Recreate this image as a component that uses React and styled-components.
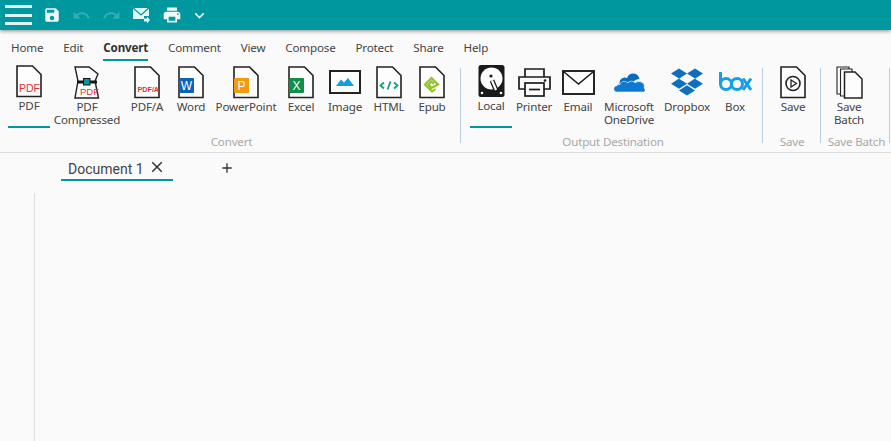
import styled, { createGlobalStyle } from "styled-components";
import { FaDropbox } from "react-icons/fa";
import { MdSave, MdUndo, MdRedo, MdPrint, MdKeyboardArrowDown, MdClose, MdAdd } from "react-icons/md";

const GlobalStyle = createGlobalStyle`
  html, body { margin: 0; padding: 0; height: 100%; background: #fafafa; }
  #root { height: 100%; }
`;

const UI_FONT = `"Noto Sans", "Open Sans", sans-serif`;

const DocShape = ({ children }) => (
  <svg width="26" height="33" viewBox="0 0 26 33">
    <path d="M1 1 H16.5 L25 9.5 V31.5 H1 Z" fill="#fdfdfd" stroke="#222" strokeWidth="1.6" />
    {children}
  </svg>
);

const PdfIcon = () => (
  <DocShape>
    <text x="3" y="26.5" fontFamily="Liberation Sans" fontSize="10.5" fill="#e0303a">PDF</text>
  </DocShape>
);

const PdfCompressedIcon = () => (
  <svg width="26" height="33" viewBox="0 0 26 33" overflow="visible">
    <path d="M1 1 H15 L24 8 L21 15 L24.5 32 H1 L4 15 Z" fill="#fdfdfd" stroke="#222" strokeWidth="1.4" />
    <path d="M3 16 H23" stroke="#151515" strokeWidth="3" />
    <rect x="9.5" y="12.5" width="6.5" height="6.5" fill="#00979f" stroke="#151515" strokeWidth="1" />
    <text x="6" y="28.5" fontFamily="Liberation Sans" fontSize="9.5" fill="#e0303a">PDF</text>
  </svg>
);

const PdfAIcon = () => (
  <DocShape>
    <text x="3.5" y="26" fontFamily="Liberation Sans" fontSize="7.2" fontWeight="700" fill="#e0303a">PDF/A</text>
  </DocShape>
);

const AppDocIcon = ({ color, letter }) => (
  <DocShape>
    <rect x="1" y="12" width="15" height="15" rx="1" fill={color} />
    <text x="8.5" y="24" textAnchor="middle" fontFamily="Liberation Sans" fontSize="12" fill="#fff">{letter}</text>
  </DocShape>
);

const ImageIcon = () => (
  <svg width="32" height="24" viewBox="0 0 32 24">
    <rect x="1" y="1" width="30" height="22" fill="#fdfdfd" stroke="#222" strokeWidth="2" />
    <path d="M7 16 L12 9.5 L15 12.5 L19 8 L25 16 Z" fill="#0f9fe3" />
  </svg>
);

const HtmlIcon = () => (
  <DocShape>
    <path d="M8 16.5 L4.5 19.5 L8 22.5 M18 16.5 L21.5 19.5 L18 22.5 M14.5 15.5 L11.5 23.5" fill="none" stroke="#12a26c" strokeWidth="1.8" />
  </DocShape>
);

const EpubIcon = () => (
  <DocShape>
    <path d="M16.5 23 L13 25.5 L6 18.5 L12.5 12 L19 18.5 L12.5 22 L9.5 18.5 L12.5 15.5 L15 18"
      fill="none" stroke="#8cc21f" strokeWidth="2.1" />
  </DocShape>
);

const LocalIcon = () => (
  <svg width="27" height="32" viewBox="0 0 27 32">
    <rect x="0.5" y="0" width="26" height="32" rx="2.5" fill="#1a1a1a" />
    <circle cx="13.5" cy="13.5" r="11" fill="#fdfdfd" />
    <circle cx="13" cy="11" r="1.6" fill="#1a1a1a" />
    <path d="M14 15.5 L18 25" stroke="#1a1a1a" strokeWidth="4.8" />
    <path d="M14 15.5 L18 25" stroke="#fdfdfd" strokeWidth="2.2" />
    <circle cx="4" cy="28" r="1.3" fill="#fdfdfd" />
    <circle cx="23" cy="28" r="1.3" fill="#fdfdfd" />
  </svg>
);

const PrinterIcon = () => (
  <svg width="33" height="29" viewBox="0 0 33 29">
    <g fill="none" stroke="#1c1c1c" strokeWidth="1.7">
      <path d="M7 9 V1 H26 V9" />
      <path d="M7 21 H1 V9 H32 V21 H26" />
      <rect x="7" y="15" width="19" height="13" fill="#fdfdfd" />
      <path d="M11 21.5 H22" />
    </g>
    <circle cx="27" cy="12.5" r="1.3" fill="#1c1c1c" />
  </svg>
);

const EmailIcon = () => (
  <svg width="33" height="25" viewBox="0 0 33 25">
    <rect x="1" y="1" width="31" height="23" fill="#fdfdfd" stroke="#1c1c1c" strokeWidth="1.9" />
    <path d="M2 2 L16.5 14 L31 2" fill="none" stroke="#1c1c1c" strokeWidth="1.6" />
  </svg>
);

const OneDriveIcon = () => (
  <svg width="33" height="24" viewBox="0 0 33 24">
    <path d="M7 15 C5 9 11 6 14 8 C16 2 25 2 26.5 9 C24 9 22 10 21 11.5 C17 10 14 12 14 14.5 C11 14 9 15 8.5 17 C8 16.5 7.5 16 7 15 Z" fill="#0a6cbf" />
    <path d="M3 22 C0 21 0 16 4 15.8 C4 15 5 14 7 14.5 C8.5 10 13 11 15 13 C17 10 21 11 22 13 C26 9.5 33 13 31 18 C33 20 32 22 30 22 Z" fill="#0f78d0" stroke="#fafafa" strokeWidth="0.6" />
  </svg>
);

const DropboxIcon = styled(FaDropbox)`
  width: 32px;
  height: 32px;
  color: #0d6fc0;
`;

const BoxIcon = () => (
  <svg width="33" height="20" viewBox="0 0 33 20">
    <g fill="none" stroke="#149fe8" strokeWidth="3">
      <path d="M1.5 0 V12" />
      <circle cx="7" cy="12" r="5.5" />
      <circle cx="18" cy="12" r="5.5" />
      <path d="M24 6.5 L32 18 M32 6.5 L24 18" />
    </g>
  </svg>
);

const SaveIcon = () => (
  <DocShape>
    <circle cx="13" cy="17.5" r="7" fill="none" stroke="#222" strokeWidth="1.6" />
    <path d="M11 14 L16.5 17.5 L11 21 Z" fill="none" stroke="#222" strokeWidth="1.3" />
  </DocShape>
);

const SaveBatchIcon = () => (
  <svg width="27" height="33" viewBox="0 0 27 33">
    <g fill="#fdfdfd" stroke="#222" strokeWidth="1.1">
      <path d="M1 1 H13 V28 H1 Z" />
      <path d="M4.5 3 H16 V30 H4.5 Z" />
      <path d="M8.5 6 H19 L26 13 V32 H8.5 Z" strokeWidth="1.5" />
    </g>
  </svg>
);

const MailSendIcon = () => (
  <svg width="17" height="17" viewBox="0 0 17 17">
    <path d="M0 1 H16 V9 H11 V12 H0 Z" fill="#e3f6f6" />
    <path d="M0 1 L8 8 L16 1" fill="none" stroke="#00979f" strokeWidth="1.3" />
    <path d="M11 11.5 H14 V9.5 L17 13 L14 16.5 V14.5 H11 Z" fill="#e3f6f6" />
  </svg>
);

const MENU = ["Home", "Edit", "Convert", "Comment", "View", "Compose", "Protect", "Share", "Help"];

const GROUPS = [
  {
    label: "Convert",
    width: 453,
    pad: 0,
    shift: -6,
    items: [
      { label: "PDF", w: 42, icon: <PdfIcon />, selected: true },
      { label: "PDF Compressed", w: 74, icon: <PdfCompressedIcon /> },
      { label: "PDF/A", w: 46, icon: <PdfAIcon /> },
      { label: "Word", w: 42, icon: <AppDocIcon color="#0b62b8" letter="W" /> },
      { label: "PowerPoint", w: 68, icon: <AppDocIcon color="#f59a0c" letter="P" /> },
      { label: "Excel", w: 42, icon: <AppDocIcon color="#0f8f4a" letter="X" /> },
      { label: "Image", w: 46, icon: <ImageIcon /> },
      { label: "HTML", w: 42, icon: <HtmlIcon /> },
      { label: "Epub", w: 44, icon: <EpubIcon /> },
    ],
  },
  {
    label: "Output Destination",
    width: 302,
    pad: 9,
    shift: 2,
    items: [
      { label: "Local", w: 42, icon: <LocalIcon />, selected: true },
      { label: "Printer", w: 44, icon: <PrinterIcon /> },
      { label: "Email", w: 44, icon: <EmailIcon /> },
      { label: "Microsoft OneDrive", w: 58, icon: <OneDriveIcon /> },
      { label: "Dropbox", w: 58, icon: <DropboxIcon /> },
      { label: "Box", w: 38, icon: <BoxIcon /> },
    ],
  },
  { label: "Save", width: 58, pad: 9, shift: 0, items: [{ label: "Save", w: 42, icon: <SaveIcon /> }] },
  { label: "Save Batch", width: 69, pad: 7, shift: 2, items: [{ label: "Save Batch", w: 42, icon: <SaveBatchIcon /> }] },
];

export default function App() {
  return (
    <Page>
      <GlobalStyle />
      <TitleBar>
        <Burger><span /><span /><span /></Burger>
        <QuickButton $w={28} $ml={6}><MdSave size={18} /></QuickButton>
        <QuickButton $w={30} $dim><MdUndo size={19} /></QuickButton>
        <QuickButton $w={30} $dim><MdRedo size={19} /></QuickButton>
        <QuickButton $w={30}><MailSendIcon /></QuickButton>
        <QuickButton $w={30} $ml={1}><MdPrint size={20} /></QuickButton>
        <QuickButton $w={24}><MdKeyboardArrowDown size={19} /></QuickButton>
      </TitleBar>

      <MenuBar>
        {MENU.map((name) => (
          <MenuItem key={name} $active={name === "Convert"}>{name}</MenuItem>
        ))}
      </MenuBar>

      <Ribbon>
        {GROUPS.map((group) => (
          <Group key={group.label} $w={group.width}>
            <Items $pl={group.pad}>
              {group.items.map((item) => (
                <Item key={item.label} $w={item.w} $selected={item.selected}>
                  <IconSlot>{item.icon}</IconSlot>
                  <ItemLabel>{item.label}</ItemLabel>
                </Item>
              ))}
            </Items>
            <GroupLabel $shift={group.shift}>{group.label}</GroupLabel>
          </Group>
        ))}
      </Ribbon>

      <TabBar>
        <Tab>
          <span>Document 1</span>
          <MdClose size={18} />
        </Tab>
        <AddTab><MdAdd size={16} /></AddTab>
      </TabBar>

      <Editor />
    </Page>
  );
}

const Page = styled.div`
  height: 100vh;
  overflow: hidden;
  display: flex;
  flex-direction: column;
  background: #fafafa;
  font-family: ${UI_FONT};
`;

const TitleBar = styled.div`
  height: 30px;
  flex: none;
  display: flex;
  align-items: center;
  background: #00979f;
  color: #e6f7f7;
  box-shadow: 0 1px 4px rgba(0, 0, 0, 0.45);
  position: relative;
  padding-left: 5px;
`;

const Burger = styled.div`
  width: 27px;
  height: 20px;
  display: flex;
  flex-direction: column;
  justify-content: space-between;

  span {
    display: block;
    height: 3px;
    background: #dff5f5;
  }
`;

const QuickButton = styled.div`
  width: ${(p) => p.$w}px;
  margin-left: ${(p) => p.$ml || 0}px;
  display: flex;
  justify-content: center;
  color: ${(p) => (p.$dim ? "#2fb0b7" : "#eefafa")};
`;

const MenuBar = styled.div`
  height: 31px;
  flex: none;
  display: flex;
  align-items: flex-end;
  gap: 20px;
  padding-left: 11px;
`;

const MenuItem = styled.div`
  height: 23px;
  box-sizing: border-box;
  font-size: 11.6px;
  letter-spacing: -0.18px;
  line-height: 20px;
  color: ${(p) => (p.$active ? "#333" : "#444")};
  font-weight: ${(p) => (p.$active ? 700 : 400)};
  border-bottom: 2px solid ${(p) => (p.$active ? "#00979f" : "transparent")};
`;

const Ribbon = styled.div`
  height: 92px;
  flex: none;
  box-sizing: border-box;
  display: flex;
  padding-left: 8px;
  border-bottom: 1px solid #dcdcdc;
`;

const Group = styled.div`
  width: ${(p) => p.$w}px;
  flex: none;
  box-sizing: border-box;
  display: flex;
  flex-direction: column;
  align-items: center;
  position: relative;

  &::after {
    content: "";
    position: absolute;
    right: 0;
    top: 7px;
    bottom: 9px;
    width: 1px;
    background: #b9cfe0;
  }
`;

const Items = styled.div`
  height: 74px;
  align-self: flex-start;
  display: flex;
  padding-left: ${(p) => p.$pl}px;
`;

const Item = styled.div`
  width: ${(p) => p.$w}px;
  flex: none;
  box-sizing: border-box;
  display: flex;
  flex-direction: column;
  align-items: center;
  padding-top: ${(p) => (p.$selected ? 3 : 4)}px;
  height: 67px;
  border-bottom: 2px solid ${(p) => (p.$selected ? "#00979f" : "transparent")};
`;

const IconSlot = styled.div`
  height: 34px;
  display: flex;
  align-items: center;
  justify-content: center;
`;

const ItemLabel = styled.div`
  margin-top: 1px;
  font-size: 11.6px;
  letter-spacing: -0.18px;
  line-height: 13px;
  color: #444;
  text-align: center;
`;

const GroupLabel = styled.div`
  margin-left: ${(p) => p.$shift}px;
  font-size: 11.6px;
  letter-spacing: -0.18px;
  line-height: 14px;
  color: #a8a8a8;
  white-space: nowrap;
`;

const TabBar = styled.div`
  height: 29px;
  flex: none;
  display: flex;
  padding-left: 61px;
`;

const Tab = styled.div`
  width: 112px;
  height: 28px;
  box-sizing: border-box;
  display: flex;
  align-items: center;
  gap: 4px;
  padding: 6px 0 0 7px;
  font-family: Roboto, sans-serif;
  font-size: 14px;
  color: #444;
  border-bottom: 2px solid #00979f;

  svg { color: #333; margin-top: -4px; }
`;

const AddTab = styled.div`
  margin-left: 46px;
  height: 27px;
  display: flex;
  align-items: center;
  padding-top: 1px;
  color: #333;
`;

const Editor = styled.div`
  flex: 1;
  margin: 11px 0 0 34px;
  border-left: 1px solid #ddd;
`;
